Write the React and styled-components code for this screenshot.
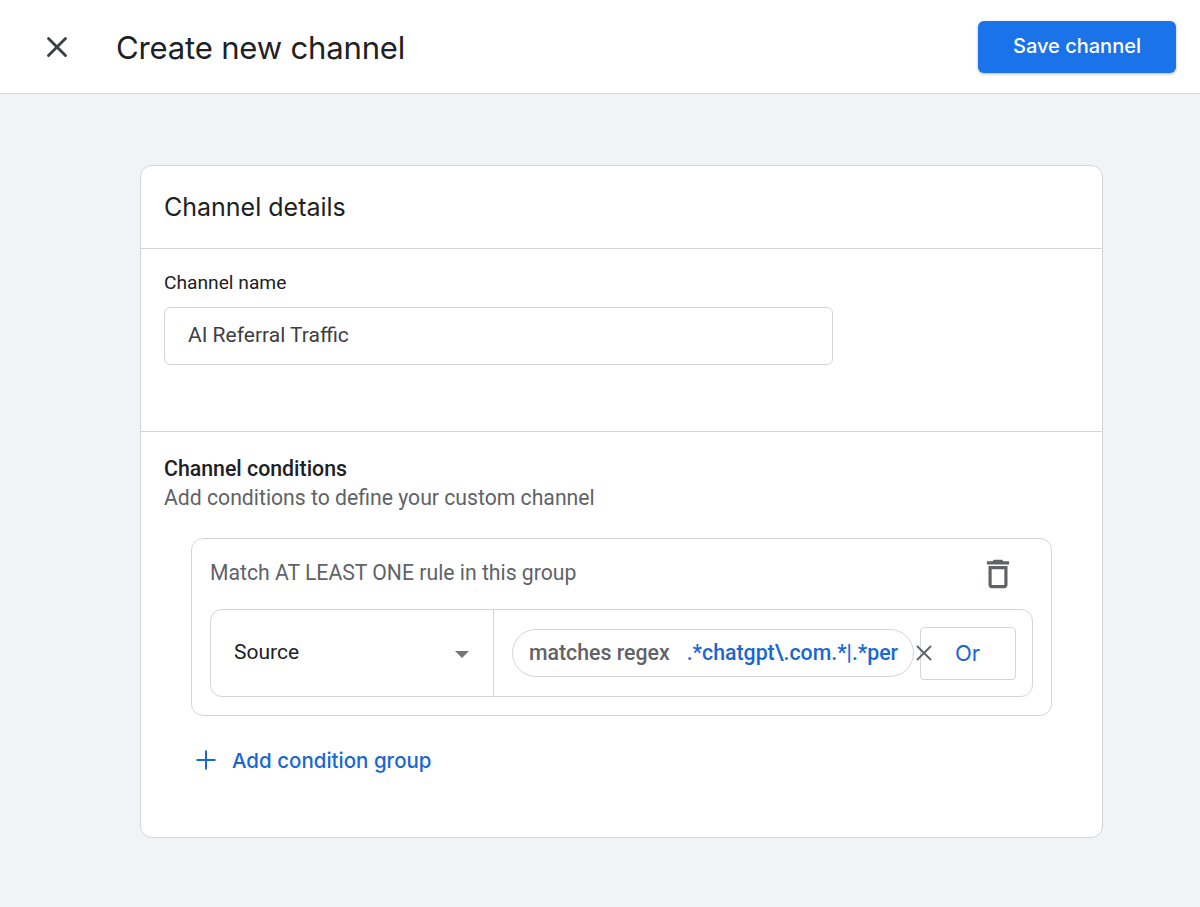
import React from 'react';
import styled, { createGlobalStyle } from 'styled-components';
import { X, Plus } from 'lucide-react';

const GlobalStyle = createGlobalStyle`
  html, body {
    margin: 0;
    padding: 0;
    background: #f1f3f4;
    font-family: Roboto, "Liberation Sans", sans-serif;
  }
  * {
    box-sizing: border-box;
  }
`;

const Page = styled.div`
  width: 1200px;
  height: 907px;
  overflow: hidden;
  background: #f1f3f4;
`;

const Header = styled.header`
  height: 94px;
  background: #fff;
  border-bottom: 1px solid #d3d5d9;
  display: flex;
  align-items: center;
  padding: 0 24px 0 40px;
`;

const CloseButton = styled.button`
  width: 34px;
  height: 34px;
  padding: 0;
  border: 0;
  background: none;
  color: #3c4043;
  display: flex;
  align-items: center;
  justify-content: center;
  margin-right: 42px;
`;

const Title = styled.h1`
  flex: 1;
  margin: 0;
  padding-top: 2px;
  font-family: Inter, sans-serif;
  font-size: 31.1px;
  font-weight: 400;
  letter-spacing: -0.2px;
  color: #202124;
`;

const SaveButton = styled.button`
  width: 198px;
  height: 52px;
  margin-top: 1px;
  padding: 0 0 2px;
  border: 0;
  border-radius: 6px;
  background: #1a73e8;
  color: #fff;
  font-family: Inter, sans-serif;
  font-size: 20px;
  font-weight: 500;
  box-shadow: 0 1px 3px rgba(60, 64, 67, 0.4);
`;

const Card = styled.main`
  width: 963px;
  height: 673px;
  margin: 71px 0 0 140px;
  background: #fff;
  border: 1px solid #d3d5d9;
  border-radius: 12px;
`;

const CardHead = styled.div`
  height: 83px;
  padding-left: 23px;
  display: flex;
  align-items: center;
  border-bottom: 1px solid #d3d5d9;
`;

const CardTitle = styled.h2`
  margin: 0;
  font-family: Inter, sans-serif;
  font-size: 25px;
  font-weight: 400;
  color: #202124;
`;

const NameSection = styled.section`
  height: 183px;
  padding: 22px 23px 0;
  border-bottom: 1px solid #d3d5d9;
`;

const FieldLabel = styled.div`
  font-size: 19.2px;
  line-height: 24px;
  color: #202124;
  margin-bottom: 12px;
`;

const TextField = styled.div`
  width: 669px;
  height: 58px;
  padding: 0 0 2px 23px;
  border: 1px solid #d3d5d9;
  border-radius: 6px;
  display: flex;
  align-items: center;
  font-size: 21px;
  color: #3c4043;
`;

const ConditionSection = styled.section`
  padding: 24px 23px 0;
`;

const SectionTitle = styled.div`
  font-size: 21.3px;
  line-height: 26px;
  font-weight: 500;
  color: #202124;
`;

const SectionHint = styled.div`
  padding-top: 1px;
  font-size: 21.2px;
  line-height: 30px;
  color: #5f6368;
`;

const Group = styled.div`
  width: 861px;
  height: 178px;
  margin: 25px 0 0 27px;
  padding: 0 18px;
  border: 1px solid #d3d5d9;
  border-radius: 12px;
`;

const GroupHead = styled.div`
  height: 70px;
  padding: 0 16px 4px 0;
  display: flex;
  align-items: center;
  justify-content: space-between;
  font-size: 21.2px;
  color: #5f6368;
`;

const DeleteIcon = styled.svg`
  width: 38px;
  height: 38px;
  margin-top: 3px;
  fill: #5f6368;
`;

const RuleRow = styled.div`
  width: 823px;
  height: 88px;
  display: flex;
  border: 1px solid #d3d5d9;
  border-radius: 12px;
`;

const SourceSelect = styled.div`
  width: 283px;
  padding: 0 24px 2px 23px;
  border-right: 1px solid #d3d5d9;
  display: flex;
  align-items: center;
  justify-content: space-between;
  font-size: 21px;
  color: #202124;
`;

const Caret = styled.span`
  width: 0;
  height: 0;
  margin-top: 4px;
  border-left: 7.5px solid transparent;
  border-right: 7.5px solid transparent;
  border-top: 7.5px solid #757575;
`;

const RuleBody = styled.div`
  flex: 1;
  padding-left: 18px;
  display: flex;
  align-items: center;
`;

const Pill = styled.div`
  width: 402px;
  height: 48px;
  padding: 0 0 2px 16px;
  margin-right: 6px;
  border: 1px solid #d3d5d9;
  border-radius: 24px;
  display: flex;
  align-items: center;
  font-size: 21.3px;
  font-weight: 500;
  white-space: nowrap;
  overflow: hidden;
`;

const PillKey = styled.span`
  color: #5f6368;
  margin-right: 17px;
`;

const PillValue = styled.span`
  color: #1967d2;
`;

const OrSlot = styled.div`
  position: relative;
`;

const RemoveIcon = styled.span`
  position: absolute;
  left: -9px;
  top: 13px;
  display: flex;
  color: #5f6368;
`;

const OrButton = styled.button`
  width: 96px;
  height: 53px;
  padding: 0 1px 0 0;
  border: 1px solid #d3d5d9;
  border-radius: 4px;
  background: #fff;
  color: #1967d2;
  font-family: Inter, sans-serif;
  font-size: 22px;
  font-weight: 400;
`;

const AddGroup = styled.div`
  margin: 29px 0 0 27px;
  display: flex;
  align-items: center;
  gap: 11px;
  color: #1967d2;
  font-family: Inter, sans-serif;
  font-size: 20.5px;
  font-weight: 500;
`;

export default function App() {
  return (
    <Page>
      <GlobalStyle />
      <Header>
        <CloseButton>
          <X size={34} strokeWidth={2} />
        </CloseButton>
        <Title>Create new channel</Title>
        <SaveButton>Save channel</SaveButton>
      </Header>
      <Card>
        <CardHead>
          <CardTitle>Channel details</CardTitle>
        </CardHead>
        <NameSection>
          <FieldLabel>Channel name</FieldLabel>
          <TextField>AI Referral Traffic</TextField>
        </NameSection>
        <ConditionSection>
          <SectionTitle>Channel conditions</SectionTitle>
          <SectionHint>Add conditions to define your custom channel</SectionHint>
          <Group>
            <GroupHead>
              <span>Match AT LEAST ONE rule in this group</span>
              <DeleteIcon viewBox="0 0 24 24">
                <path d="M6 19c0 1.1.9 2 2 2h8c1.1 0 2-.9 2-2V7H6v12zM8 9h8v10H8V9zm7.5-5l-1-1h-5l-1 1H5v2h14V4h-3.5z" />
              </DeleteIcon>
            </GroupHead>
            <RuleRow>
              <SourceSelect>
                Source
                <Caret />
              </SourceSelect>
              <RuleBody>
                <Pill>
                  <PillKey>matches regex</PillKey>
                  <PillValue>.*chatgpt\.com.*|.*per</PillValue>
                </Pill>
                <OrSlot>
                  <RemoveIcon>
                    <X size={26} strokeWidth={1.7} />
                  </RemoveIcon>
                  <OrButton>Or</OrButton>
                </OrSlot>
              </RuleBody>
            </RuleRow>
          </Group>
          <AddGroup>
            <Plus size={30} strokeWidth={1.6} />
            Add condition group
          </AddGroup>
        </ConditionSection>
      </Card>
    </Page>
  );
}
